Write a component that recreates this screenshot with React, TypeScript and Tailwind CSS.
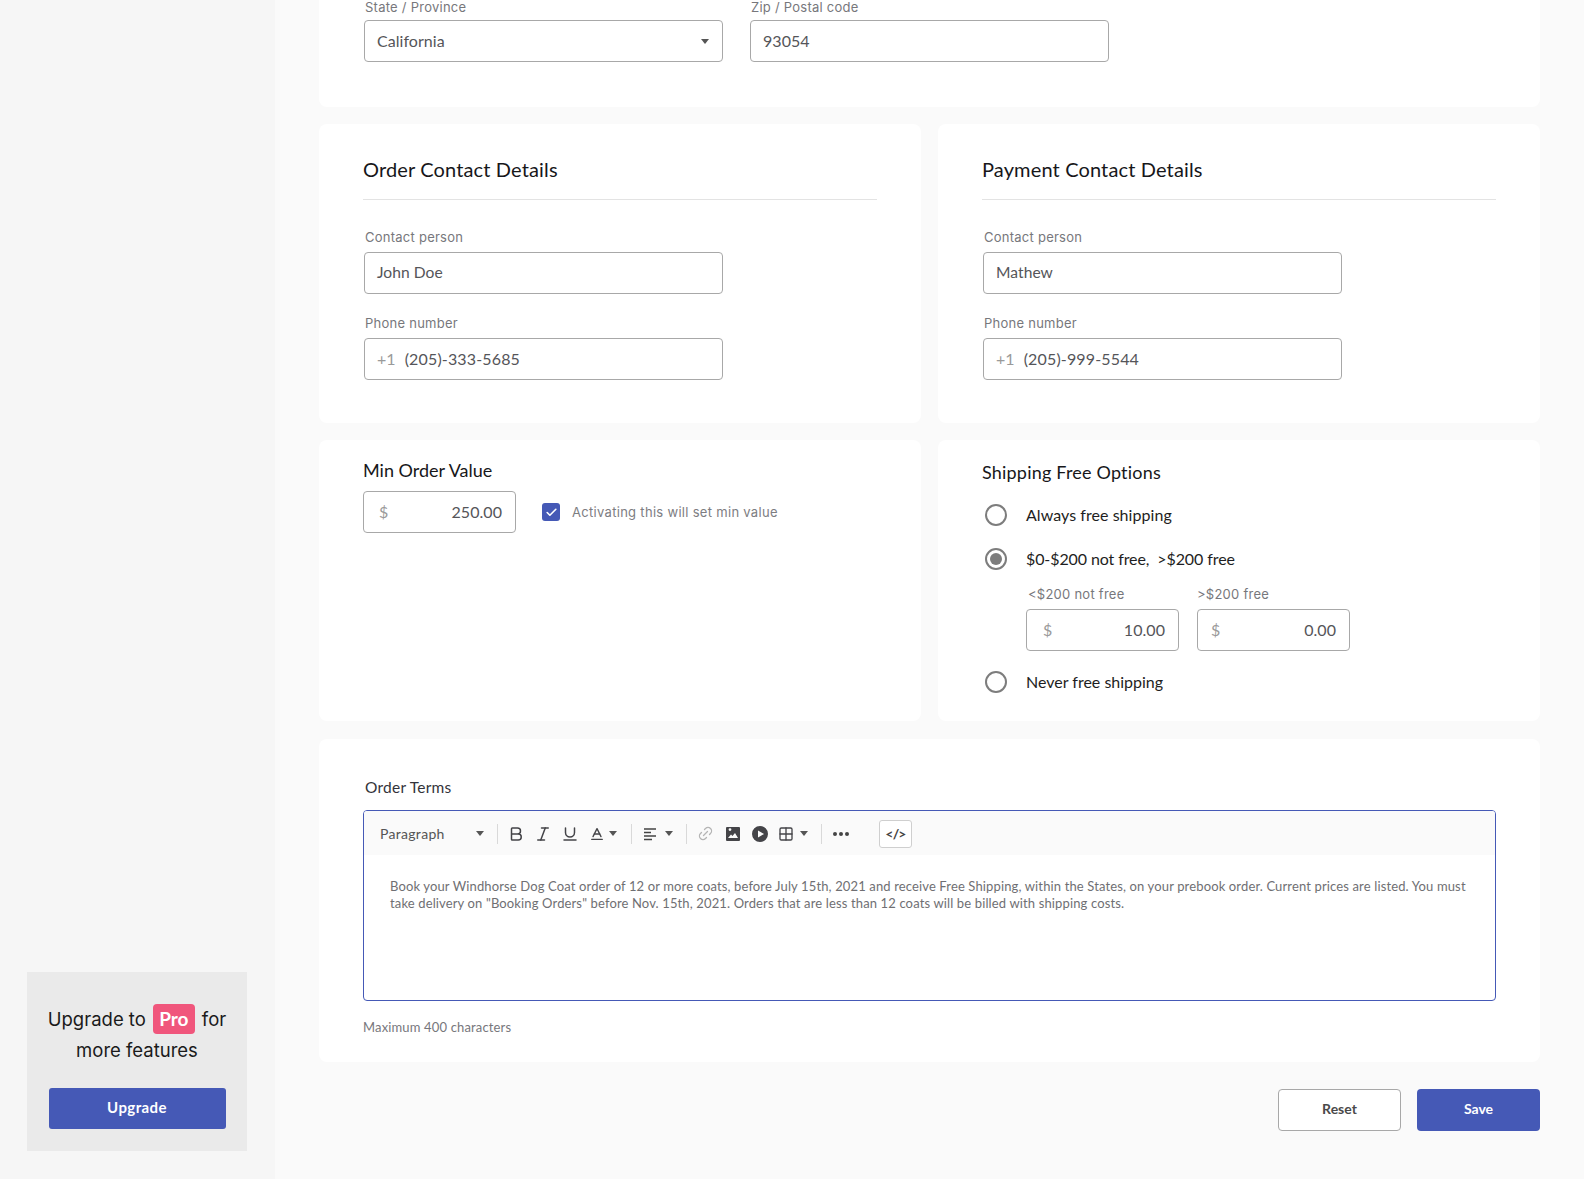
import React from "react";
import { Bold, Italic, Underline, Baseline, Link2, Check, Grid2x2 } from "lucide-react";

function Label({ children, className = "" }: { children: React.ReactNode; className?: string }) {
  return <div className={`font-['Inter',sans-serif] text-[13px] tracking-[0.25px] text-[#77777c] ${className}`}>{children}</div>;
}

function Box({ children, className = "" }: { children: React.ReactNode; className?: string }) {
  return (
    <div className={`flex h-[42px] items-center rounded-[4px] border border-[#a8a8a8] bg-white font-['Lato',sans-serif] text-[16px] tracking-[0.05px] text-[#555559] ${className}`}>
      {children}
    </div>
  );
}

function Caret({ className = "" }: { className?: string }) {
  return (
    <svg width="8" height="5" viewBox="0 0 8 5" className={className}>
      <path d="M0 0h8L4 5z" fill="#555" />
    </svg>
  );
}

function Sep() {
  return <div className="h-[20px] w-px bg-[#d9d9d9]" />;
}

function Money({ value, className = "" }: { value: string; className?: string }) {
  return (
    <Box className={`w-[153px] justify-between pr-[13px] ${className}`}>
      <span className="text-[#9a9a9a]">$</span>
      <span>{value}</span>
    </Box>
  );
}

function Contact({ title, name, phone }: { title: string; name: string; phone: string }) {
  return (
    <section className="h-[299px] flex-1 rounded-[8px] bg-white px-[44px] pt-[32px]">
      <h2 className="border-b border-[#e3e3e3] pb-[17px] font-['Lato',sans-serif] text-[20px] leading-[26px] tracking-[0.14px] text-[#17171a]">{title}</h2>
      <Label className="mt-[29px] pl-[2px] leading-[16px]">Contact person</Label>
      <Box className="ml-[1px] mt-[6.5px] w-[359px] pl-[12px]">
        <span className="text-[15.6px]">{name}</span>
      </Box>
      <Label className="mt-[21.5px] pl-[2px] leading-[16px]">Phone number</Label>
      <Box className="ml-[1px] mt-[6.5px] w-[359px] pl-[12px]">
        <span className="mr-[9px] text-[#9a9a9a]">+1</span>
        <span className="tracking-[0.15px]">{phone}</span>
      </Box>
    </section>
  );
}

function Radio({ on }: { on?: boolean }) {
  return (
    <span className="flex h-[22px] w-[22px] items-center justify-center rounded-full border-2 border-[#7d7d7d] bg-white">
      {on && <span className="h-[12px] w-[12px] rounded-full bg-[#7d7d7d]" />}
    </span>
  );
}

function RadioRow({ on, children, className = "" }: { on?: boolean; children: React.ReactNode; className?: string }) {
  return (
    <div className={`flex items-center gap-[19px] pl-[3px] font-['Lato',sans-serif] text-[16px] text-[#1e1e22] ${className}`}>
      <Radio on={on} />
      <span>{children}</span>
    </div>
  );
}

function Toolbar() {
  const ic = "h-[18px] w-[18px] text-[#444448]";
  return (
    <div className="flex h-[44px] items-center bg-[#fafafa] pl-[16px] pt-[1px] text-[#555]">
      <span className="w-[96px] font-['Lato',sans-serif] text-[14px] tracking-[0.3px] text-[#555]">Paragraph</span>
      <Caret className="mr-[13px]" />
      <Sep />
      <span className="ml-[9px] w-[27px]"><Bold className={ic} strokeWidth={2} /></span>
      <span className="w-[27px]"><Italic className={ic} strokeWidth={2} /></span>
      <span className="w-[27px]"><Underline className={ic} strokeWidth={2} /></span>
      <span className="flex w-[18px] justify-center"><Baseline className="h-[16px] w-[16px] text-[#444448]" strokeWidth={2} /></span>
      <Caret className="ml-[3px] mr-[14px]" />
      <Sep />
      <svg width="14" height="14" viewBox="0 0 14 14" className="ml-[11px]">
        <path d="M1 2h12M1 5.5h7M1 9h12M1 12.5h8" stroke="#444" strokeWidth="1.5" fill="none" />
      </svg>
      <Caret className="ml-[8px] mr-[13px]" />
      <Sep />
      <span className="ml-[10px] w-[28px]"><Link2 className="h-[17px] w-[17px] -rotate-45 text-[#b5b5b5]" strokeWidth={1.8} /></span>
      <svg width="16" height="16" viewBox="0 0 16 16" className="mr-[11px]">
        <path fillRule="evenodd" d="M2 1h12a1 1 0 011 1v12a1 1 0 01-1 1H2a1 1 0 01-1-1V2a1 1 0 011-1zm1 11h10l-3-5-2.5 3L6 8.5zm2-7a1.4 1.4 0 100-2.8A1.4 1.4 0 005 5z" fill="#444448" />
      </svg>
      <svg width="16" height="16" viewBox="0 0 16 16" className="mr-[10px]">
        <path fillRule="evenodd" d="M8 0a8 8 0 110 16A8 8 0 018 0zM6 4.5v7L12 8z" fill="#444448" />
      </svg>
      <Grid2x2 className="h-[16px] w-[16px] text-[#444448]" strokeWidth={2} />
      <Caret className="ml-[6px] mr-[13px]" />
      <Sep />
      <svg width="16" height="4" viewBox="0 0 16 4" className="ml-[11px]">
        <circle cx="2" cy="2" r="2" fill="#444" />
        <circle cx="8" cy="2" r="2" fill="#444" />
        <circle cx="14" cy="2" r="2" fill="#444" />
      </svg>
      <span className="ml-[30px] flex h-[28px] w-[33px] items-center justify-center rounded-[3px] border border-[#cfcfcf] bg-white font-['Lato',sans-serif] text-[14px] font-bold tracking-[-0.8px] text-[#444]">{"</>"}</span>
    </div>
  );
}

export default function App() {
  return (
    <div className="flex h-[1179px] w-[1584px] overflow-hidden bg-[#fafafa]">
      <aside className="flex h-full w-[275px] shrink-0 flex-col justify-end bg-[#f6f6f6] pb-[28px] pl-[27px]">
        <div className="flex h-[179px] w-[220px] flex-col items-center bg-[#eaeaea] pt-[32px]">
          <p className="whitespace-nowrap text-center font-['Inter',sans-serif] text-[18.5px] leading-[31px] text-[#1a1a1a]">
            Upgrade to
            <span className="mx-[7px] inline-block h-[30px] w-[42px] rounded-[4px] bg-[#f0567c] text-center font-['Lato',sans-serif] text-[19px] font-bold leading-[30px] text-white">Pro</span>
            for
            <br />
            more features
          </p>
          <button className="mt-[22px] h-[41px] w-[177px] rounded-[3px] bg-[#4559b6] pb-[2px] font-['Lato',sans-serif] text-[15px] font-bold tracking-[0.4px] text-white">Upgrade</button>
        </div>
      </aside>

      <main className="w-[1265px] pl-[44px]">
        <section className="h-[107px] w-[1221px] rounded-b-[8px] bg-white pl-[45px]">
          <div className="flex gap-[27px]">
            <div>
              <Label className="pl-[1px] leading-[14px]">State / Province</Label>
              <Box className="mt-[6px] w-[359px] justify-between pl-[12px] pr-[13px]">
                California
                <Caret />
              </Box>
            </div>
            <div>
              <Label className="pl-[1px] leading-[14px]">Zip / Postal code</Label>
              <Box className="mt-[6px] w-[359px] pl-[12px]">93054</Box>
            </div>
          </div>
        </section>

        <div className="mt-[17px] flex w-[1221px] gap-[17px]">
          <Contact title="Order Contact Details" name="John Doe" phone="(205)-333-5685" />
          <Contact title="Payment Contact Details" name="Mathew" phone="(205)-999-5544" />
        </div>

        <div className="mt-[17px] flex w-[1221px] gap-[17px]">
          <section className="h-[281px] flex-1 rounded-[8px] bg-white pl-[44px] pt-[18px]">
            <h3 className="font-['Lato',sans-serif] text-[18px] leading-[24px] text-[#17171a]">Min Order Value</h3>
            <div className="mt-[9px] flex items-center gap-[26px]">
              <Money value="250.00" className="pl-[15px]" />
              <div className="flex items-center gap-[12px]">
                <span className="flex h-[18px] w-[18px] items-center justify-center rounded-[3px] bg-[#4559b6]">
                  <Check className="h-[13px] w-[13px] text-white" strokeWidth={3} />
                </span>
                <span className="mt-[2px] font-['Inter',sans-serif] text-[13px] tracking-[0.3px] text-[#7d7d82]">Activating this will set min value</span>
              </div>
            </div>
          </section>

          <section className="h-[281px] flex-1 rounded-[8px] bg-white pl-[44px] pt-[20px]">
            <h3 className="font-['Lato',sans-serif] text-[18px] leading-[24px] tracking-[0.2px] text-[#17171a]">Shipping Free Options</h3>
            <RadioRow className="mt-[19px] tracking-[0.05px]">Always free shipping</RadioRow>
            <RadioRow on className="mt-[20px] tracking-[-0.1px]">$0-$200 not free,&nbsp; &gt;$200 free</RadioRow>
            <div className="mt-[15px] flex gap-[18px] pl-[44px]">
              <div>
                <Label className="pl-[2px] leading-[16px]">&lt;$200 not free</Label>
                <Money value="10.00" className="mt-[7px] pl-[16px]" />
              </div>
              <div>
                <Label className="leading-[16px]">&gt;$200 free</Label>
                <Money value="0.00" className="mt-[7px] pl-[13px]" />
              </div>
            </div>
            <RadioRow className="mt-[19px]">Never free shipping</RadioRow>
          </section>
        </div>

        <section className="mt-[18px] h-[323px] w-[1221px] rounded-[8px] bg-white pl-[44px] pt-[38px]">
          <div className="pl-[2px] font-['Lato',sans-serif] text-[15.5px] leading-[20px] tracking-[0.25px] text-[#33333a]">Order Terms</div>
          <div className="mt-[13px] h-[191px] w-[1133px] overflow-hidden rounded-[4px] border border-[#4559b6] bg-white">
            <Toolbar />
            <p className="px-[26px] pt-[23px] font-['Lato',sans-serif] text-[13px] leading-[17px] tracking-[0.135px] text-[#6f6f73]">
              Book your Windhorse Dog Coat order of 12 or more coats, before July 15th, 2021 and receive Free Shipping, within the States, on your prebook order. Current prices are listed. You must take delivery on "Booking Orders" before Nov. 15th, 2021. Orders that are less than 12 coats will be billed with shipping costs.
            </p>
          </div>
          <div className="mt-[17px] font-['Lato',sans-serif] text-[13px] leading-[18px] tracking-[0.15px] text-[#77777c]">Maximum 400 characters</div>
        </section>

        <div className="mt-[27px] flex w-[1221px] justify-end gap-[16px]">
          <button className="h-[42px] w-[123px] rounded-[4px] border border-[#a8a8a8] bg-white pb-[3px] font-['Lato',sans-serif] text-[14px] font-bold text-[#4a4a4a]">Reset</button>
          <button className="h-[42px] w-[123px] rounded-[4px] bg-[#4559b6] pb-[3px] font-['Lato',sans-serif] text-[14px] font-bold text-white">Save</button>
        </div>
      </main>
    </div>
  );
}
